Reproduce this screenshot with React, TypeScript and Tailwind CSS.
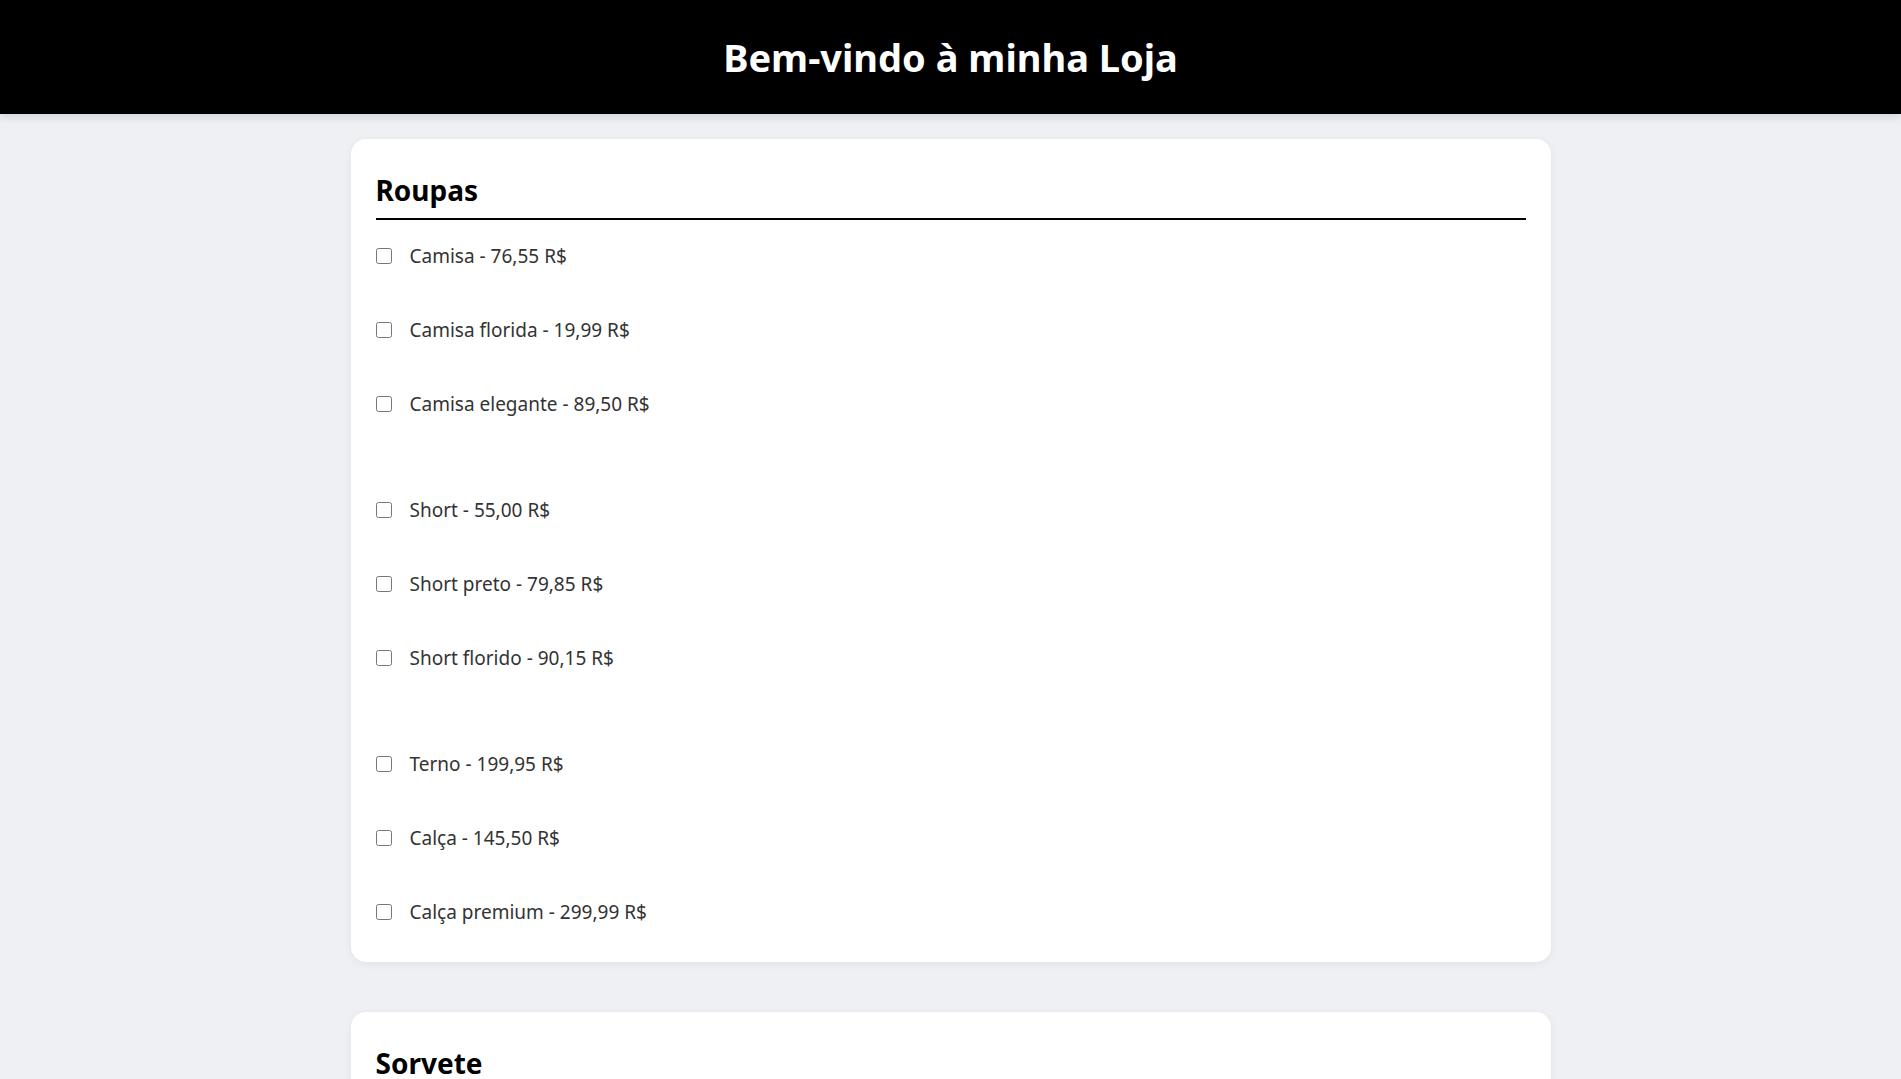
import React from "react";

interface Item {
  name: string;
  price: string;
}

interface Category {
  title: string;
  groups: Item[][];
}

const categories: Category[] = [
  {
    title: "Roupas",
    groups: [
      [
        { name: "Camisa", price: "76,55" },
        { name: "Camisa florida", price: "19,99" },
        { name: "Camisa elegante", price: "89,50" },
      ],
      [
        { name: "Short", price: "55,00" },
        { name: "Short preto", price: "79,85" },
        { name: "Short florido", price: "90,15" },
      ],
      [
        { name: "Terno", price: "199,95" },
        { name: "Calça", price: "145,50" },
        { name: "Calça premium", price: "299,99" },
      ],
    ],
  },
  {
    title: "Sorvete",
    groups: [
      [
        { name: "Sorvete de chocolate", price: "12,00" },
        { name: "Sorvete de morango", price: "11,50" },
        { name: "Sorvete de baunilha", price: "10,90" },
      ],
    ],
  },
];

const App: React.FC = () => {
  return (
    <div
      className="min-h-screen bg-[#eff0f4]"
      style={{ fontFamily: '"Noto Sans", "Open Sans", sans-serif' }}
    >
      {/* Header */}
      <header className="h-[114px] bg-black flex items-center justify-center shadow-[0_2px_10px_rgba(0,0,0,0.15)] relative">
        <h1 className="text-white text-[38px] font-bold">Bem-vindo à minha Loja</h1>
      </header>

      {/* Categories */}
      <main className="flex flex-col items-center gap-[50px] pt-[25px] pb-[50px]">
        {categories.map((cat) => (
          <section
            key={cat.title}
            className="w-[1200px] bg-white rounded-[15px] shadow-[0_2px_8px_rgba(0,0,0,0.06)] px-[25px] pt-[32px] pb-[30px]"
          >
            <h2 className="text-[28px] leading-[36px] font-bold text-black pt-[1px] pb-[10px] border-b-2 border-black">
              {cat.title}
            </h2>

            <div className="flex flex-col gap-[66px] mt-[16px]">
              {cat.groups.map((group, gi) => (
                <div key={gi} className="flex flex-col gap-[34px]">
                  {group.map((item) => (
                    <label key={item.name} className="h-[40px] flex items-center gap-[18px] cursor-pointer">
                      <input type="checkbox" className="w-4 h-4 m-0 shrink-0" />
                      <span className="text-[19px] text-[#333]">
                        {item.name} - {item.price} R$
                      </span>
                    </label>
                  ))}
                </div>
              ))}
            </div>
          </section>
        ))}
      </main>
    </div>
  );
};

export default App;
